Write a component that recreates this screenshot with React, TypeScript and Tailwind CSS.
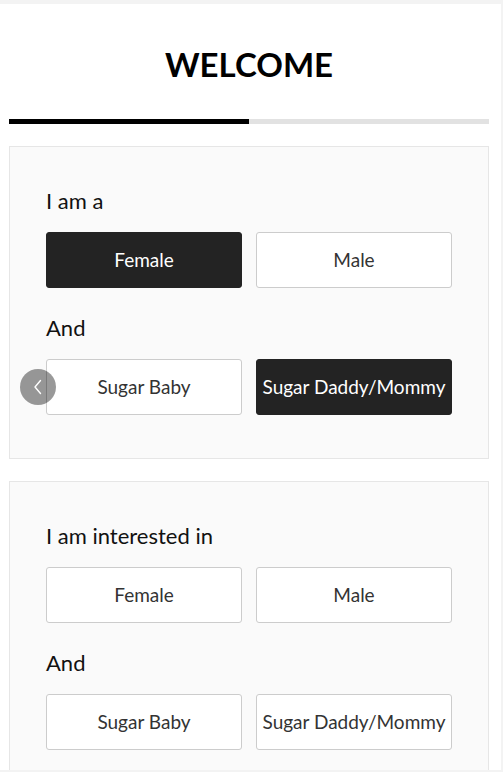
import React from "react";

function Choice({ label, active }: { label: string; active?: boolean }) {
  return (
    <div
      className={
        active
          ? "flex h-[56px] w-[196px] items-center justify-center rounded-[3px] border border-[#232323] bg-[#232323] text-[19px] text-white"
          : "flex h-[56px] w-[196px] items-center justify-center rounded-[3px] border border-[#cccccc] bg-white text-[19px] text-[#333333]"
      }
    >
      {label}
    </div>
  );
}

function Card({
  title,
  first,
  second,
  showArrow,
}: {
  title: string;
  first: [boolean, boolean];
  second: [boolean, boolean];
  showArrow?: boolean;
}) {
  return (
    <div className="border border-[#e6e6e6] bg-[#fafafa] px-[36px] pt-[39px] pb-[43px]">
      <div className="text-[22px] leading-[30px] text-[#111111]">{title}</div>
      <div className="mt-[16px] flex gap-[14px]">
        <Choice label="Female" active={first[0]} />
        <Choice label="Male" active={first[1]} />
      </div>
      <div className="mt-[25px] text-[22px] leading-[30px] text-[#111111]">And</div>
      <div className="relative mt-[16px] flex gap-[14px]">
        <Choice label="Sugar Baby" active={second[0]} />
        <Choice label="Sugar Daddy/Mommy" active={second[1]} />
        {showArrow && (
          <div className="absolute left-[-26px] top-1/2 flex h-[36px] w-[36px] -translate-y-1/2 items-center justify-center rounded-full bg-[rgba(0,0,0,0.4)]">
            <svg width="12" height="16" viewBox="0 0 12 16" fill="none">
              <polyline
                points="8.5,1.5 3,8 8.5,14.5"
                stroke="white"
                strokeWidth="1.4"
                strokeLinecap="round"
                strokeLinejoin="round"
              />
            </svg>
          </div>
        )}
      </div>
    </div>
  );
}

export default function App() {
  return (
    <div
      className="h-[772px] w-[503px] overflow-hidden bg-[#f3f3f3] pt-[4px] pr-[2px] pb-[2px]"
      style={{ fontFamily: "Lato, 'Open Sans', 'Liberation Sans', sans-serif" }}
    >
      <div className="h-full w-[501px] overflow-hidden bg-white pl-[9px] pr-[12px] pt-[40px]">
        <h1 className="text-center text-[33px] font-bold leading-[40px] text-black">WELCOME</h1>
        <div className="mt-[35px] flex h-[5px] w-[480px]">
          <div className="h-full w-1/2 bg-black" />
          <div className="h-full w-1/2 bg-[#e2e2e2]" />
        </div>
        <div className="mt-[22px] flex flex-col gap-[22px]">
          <Card title="I am a" first={[true, false]} second={[false, true]} showArrow />
          <Card title="I am interested in" first={[false, false]} second={[false, false]} />
        </div>
      </div>
    </div>
  );
}
